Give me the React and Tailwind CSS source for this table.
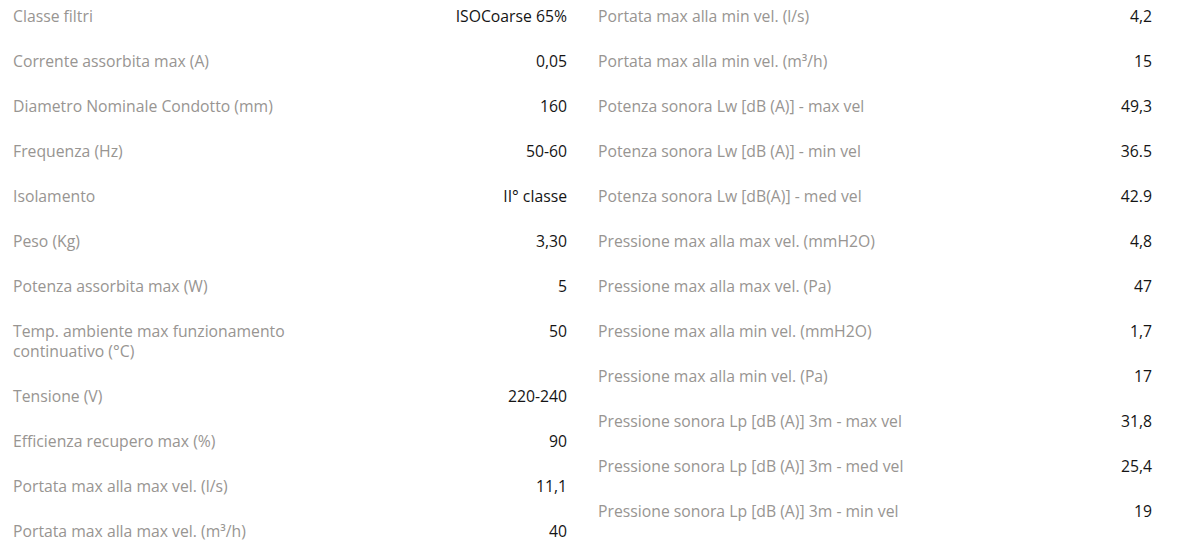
const left = [
  ["Classe filtri", "ISOCoarse 65%"],
  ["Corrente assorbita max (A)", "0,05"],
  ["Diametro Nominale Condotto (mm)", "160"],
  ["Frequenza (Hz)", "50-60"],
  ["Isolamento", "II° classe"],
  ["Peso (Kg)", "3,30"],
  ["Potenza assorbita max (W)", "5"],
  ["Temp. ambiente max funzionamento continuativo (°C)", "50"],
  ["Tensione (V)", "220-240"],
  ["Efficienza recupero max (%)", "90"],
  ["Portata max alla max vel. (l/s)", "11,1"],
  ["Portata max alla max vel. (m³/h)", "40"],
];

const right = [
  ["Portata max alla min vel. (l/s)", "4,2"],
  ["Portata max alla min vel. (m³/h)", "15"],
  ["Potenza sonora Lw [dB (A)] - max vel", "49,3"],
  ["Potenza sonora Lw [dB (A)] - min vel", "36.5"],
  ["Potenza sonora Lw [dB(A)] - med vel", "42.9"],
  ["Pressione max alla max vel. (mmH2O)", "4,8"],
  ["Pressione max alla max vel. (Pa)", "47"],
  ["Pressione max alla min vel. (mmH2O)", "1,7"],
  ["Pressione max alla min vel. (Pa)", "17"],
  ["Pressione sonora Lp [dB (A)] 3m - max vel", "31,8"],
  ["Pressione sonora Lp [dB (A)] 3m - med vel", "25,4"],
  ["Pressione sonora Lp [dB (A)] 3m - min vel", "19"],
];

function Col({ rows }) {
  return (
    <div className="flex flex-col">
      {rows.map(([k, v]) => (
        <div key={k} className="flex items-start pl-[13px] pr-[18px] py-[12.5px] leading-[20px]">
          <div className="w-[315px] text-[#989592]">{k}</div>
          <div className="flex-1 text-right text-[#151515]">{v}</div>
        </div>
      ))}
    </div>
  );
}

export default function App() {
  return (
    <div className="bg-white w-[1180px] h-[553px] overflow-hidden" style={{ fontFamily: "'Open Sans', sans-serif" }}>
      <div className="grid grid-cols-2 w-[1170px] -mt-[7px] text-[15.75px]">
        <Col rows={left} />
        <Col rows={right} />
      </div>
    </div>
  );
}
